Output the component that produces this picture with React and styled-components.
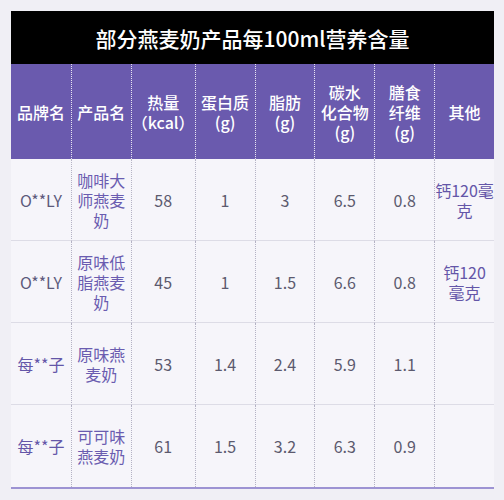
import React from 'react';
import styled, { createGlobalStyle } from 'styled-components';

const GlobalStyle = createGlobalStyle`
  body {
    margin: 0;
    background: #f0eff5;
    font-family: "Noto Sans CJK SC", "Noto Sans", sans-serif;
  }
`;

const Wrap = styled.div`
  width: 483px;
  padding: 11px 10px 11px 11px;
`;

const Title = styled.div`
  height: 53px;
  background: #000;
  color: #fff;
  font-size: 21px;
  font-weight: 500;
  display: flex;
  align-items: center;
  justify-content: center;
`;

const Grid = styled.div`
  display: grid;
  grid-template-columns: repeat(8, 1fr);
  background: #f6f5fa;
  border-bottom: 2px solid #9d93d3;
`;

const HeadCell = styled.div`
  height: 95px;
  background: #6a5aae;
  color: #fff;
  font-size: 16px;
  font-weight: 500;
  line-height: 20px;
  display: flex;
  align-items: center;
  justify-content: center;
  text-align: center;
  white-space: nowrap;
  border-left: ${p => (p.first ? 'none' : '1px dotted rgba(255,255,255,0.85)')};
`;

const Cell = styled.div`
  height: 82px;
  box-sizing: border-box;
  color: ${p => p.color || '#5c5a6e'};
  font-size: 16px;
  line-height: 20px;
  display: flex;
  align-items: center;
  justify-content: center;
  text-align: center;
  white-space: nowrap;
  border-left: ${p => (p.first ? 'none' : '1px dotted #b4b2c4')};
  border-bottom: ${p => (p.last ? 'none' : '1px solid #dddce6')};
`;

const heads = [
  '品牌名',
  '产品名',
  ['热量', '（kcal）'],
  ['蛋白质', '(g)'],
  ['脂肪', '(g)'],
  ['碳水', '化合物', '(g)'],
  ['膳食', '纤维', '(g)'],
  '其他',
];

const rows = [
  { brand: 'O**LY', brandColor: '#5d5a7c', name: ['咖啡大', '师燕麦', '奶'], nums: ['58', '1', '3', '6.5', '0.8'], other: ['钙120毫', '克'] },
  { brand: 'O**LY', brandColor: '#5d5a7c', name: ['原味低', '脂燕麦', '奶'], nums: ['45', '1', '1.5', '6.6', '0.8'], other: ['钙120', '毫克'] },
  { brand: '每**子', brandColor: '#6456a8', name: ['原味燕', '麦奶'], nums: ['53', '1.4', '2.4', '5.9', '1.1'], other: [] },
  { brand: '每**子', brandColor: '#6456a8', name: ['可可味', '燕麦奶'], nums: ['61', '1.5', '3.2', '6.3', '0.9'], other: [] },
];

const Lines = ({ parts }) => (
  <span>
    {[].concat(parts).map((t, i) => (
      <React.Fragment key={i}>
        {i > 0 && <br />}
        {t}
      </React.Fragment>
    ))}
  </span>
);

const App = () => {
  return (
    <Wrap>
      <GlobalStyle />
      <Title>部分燕麦奶产品每100ml营养含量</Title>
      <Grid>
        {heads.map((h, i) => (
          <HeadCell key={i} first={i === 0}>
            <Lines parts={h} />
          </HeadCell>
        ))}
        {rows.map((r, ri) => {
          const last = ri === rows.length - 1;
          return (
            <React.Fragment key={ri}>
              <Cell first last={last} color={r.brandColor}>{r.brand}</Cell>
              <Cell last={last} color="#6a5cb0">
                <Lines parts={r.name} />
              </Cell>
              {r.nums.map((n, ni) => (
                <Cell key={ni} last={last}>{n}</Cell>
              ))}
              <Cell last={last} color="#6456a8">
                <Lines parts={r.other} />
              </Cell>
            </React.Fragment>
          );
        })}
      </Grid>
    </Wrap>
  );
};

export default App;
